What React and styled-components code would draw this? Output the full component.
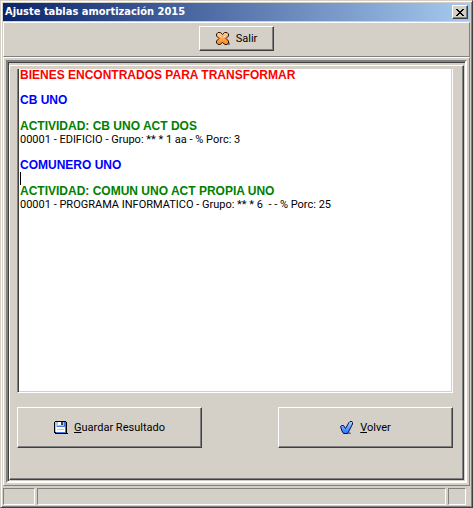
import { useState } from 'react'
import styled, { createGlobalStyle } from 'styled-components'

const face = '#d4d0c8'
const shadow = '#808080'
const dark = '#404040'

const lines = [
    { kind: 'title', text: 'BIENES ENCONTRADOS PARA TRANSFORMAR' },
    { kind: 'plain', text: '' },
    { kind: 'owner', text: 'CB UNO' },
    { kind: 'plain', text: '' },
    { kind: 'activity', text: 'ACTIVIDAD: CB UNO ACT DOS' },
    { kind: 'plain', text: '00001 - EDIFICIO - Grupo: ** * 1 aa - % Porc: 3' },
    { kind: 'plain', text: '' },
    { kind: 'owner', text: 'COMUNERO UNO' },
    { kind: 'plain', text: '', caret: true },
    { kind: 'activity', text: 'ACTIVIDAD: COMUN UNO ACT PROPIA UNO' },
    { kind: 'plain', text: '00001 - PROGRAMA INFORMATICO - Grupo: ** * 6  - - % Porc: 25' },
]

const colors = {
    title: '#ff0000',
    owner: '#0000ff',
    activity: '#008000',
    plain: '#000000',
}

const CrossIcon = () => (
    <svg width="14" height="14" viewBox="0 0 14 14" aria-hidden="true">
        <defs>
            <linearGradient id="cross" x1="0" y1="0" x2="0" y2="1">
                <stop offset="0" stopColor="#ffc890" />
                <stop offset="1" stopColor="#ff8410" />
            </linearGradient>
        </defs>
        <path d="M9 13h5v-2l-1-1z" fill="#808080" />
        <path
            d="M2 .5h2.500L6.500 2.500 8.500.5H11L12.500 2v2L10 6.500l2.500 2.500v2L11 12.500H9L6.500 10.500 4 12.500H2L.5 11V9L3 6.500.5 4V2z"
            fill="url(#cross)"
            stroke="#301808"
        />
        <path d="M2.500 2.500l3 3M10.500 2.500l-3 3" fill="none" stroke="#ffe0bc" />
    </svg>
)

const DiskIcon = () => (
    <svg width="14" height="14" viewBox="0 0 14 14" shapeRendering="crispEdges" aria-hidden="true">
        <path d="M1 0h11v1h1v11h1v1H1v-1H0V1h1z" fill="#000" />
        <path d="M1 1h11v11H2v-1H1z" fill="#3c78e0" />
        <path d="M1 1h2v10H1z" fill="#a8c8ff" />
        <path d="M3 1h7v4H3z" fill="#c0c0c0" />
        <path d="M4 1h3v3H4z" fill="#fff" />
        <path d="M7 1h2v3H7z" fill="#404040" />
        <path d="M2 6h9v5H2z" fill="#fff" />
        <path d="M3 8h7v1H3z" fill="#c0c8e0" />
    </svg>
)

const CheckIcon = () => (
    <svg width="14" height="14" viewBox="0 0 14 14" aria-hidden="true">
        <defs>
            <linearGradient id="check" x1="0" y1="0" x2="0" y2="1">
                <stop offset="0" stopColor="#b0d4ff" />
                <stop offset="1" stopColor="#2070ff" />
            </linearGradient>
        </defs>
        <path d="M6 13h5v-1l-2-1z" fill="#707070" />
        <path
            d="M.5 5.500L2 4.500h1.500l2 3L9 1.500l1-1h2l.5 1v1.500L9 10l-1.500 2.500h-4L2 10z"
            fill="url(#check)"
            stroke="#081040"
        />
    </svg>
)

const CloseGlyph = () => (
    <svg width="8" height="7" viewBox="0 0 8 7" shapeRendering="crispEdges" aria-hidden="true">
        <path d="M0 0h2v1h1v1h2V1h1V0h2v1H7v1H6v1H5v1h1v1h1v1h1v1H6V6H5V5H3v1H2v1H0V6h1V5h1V4h1V3H2V2H1V1H0z" />
    </svg>
)

export default function App() {
    const [report] = useState(lines)

    return (
        <>
            <GlobalStyle />
            <Window>
                <TitleBar>
                    <Title>Ajuste tablas amortización 2015</Title>
                    <CloseButton type="button" aria-label="Cerrar"><CloseGlyph /></CloseButton>
                </TitleBar>
                <Toolbar>
                    <ExitButton type="button"><CrossIcon />Salir</ExitButton>
                </Toolbar>
                <Body>
                    <Sunken>
                        <Content>
                            <Report role="textbox" aria-multiline="true" aria-label="Resultado" tabIndex={0}>
                                {report.map(({ kind, text, caret }, index) => (
                                    <Line key={index} $kind={kind}>{caret ? <Caret /> : text}</Line>
                                ))}
                            </Report>
                            <Actions>
                                <SaveButton type="button"><DiskIcon /><span><u>G</u>uardar Resultado</span></SaveButton>
                                <BackButton type="button"><CheckIcon /><span><u>V</u>olver</span></BackButton>
                            </Actions>
                        </Content>
                    </Sunken>
                </Body>
                <StatusBar>
                    <StatusCell $width="32px" />
                    <StatusCell />
                    <StatusCell $width="18px" />
                </StatusBar>
            </Window>
        </>
    )
}

const GlobalStyle = createGlobalStyle`
    * {
        box-sizing: border-box;
    }

    body {
        margin: 0;
        background: ${face};
        font-family: Roboto, sans-serif;
        font-size: 11px;
        color: #000;
    }
`

const Window = styled.div`
    min-height: 100vh;
    display: flex;
    flex-direction: column;
    padding: 2px 1px 0 2px;
    background: ${face};
    border: 1px solid;
    border-color: ${face} ${dark} ${dark} ${face};
    box-shadow: inset 1px 1px #fff, inset -1px -1px ${shadow};
`

const TitleBar = styled.header`
    height: 18px;
    margin: 0 1px 1px 0;
    padding: 0 2px;
    display: flex;
    align-items: center;
    justify-content: space-between;
    background: linear-gradient(to right, #0a246a, #a6caf0);
`

const Title = styled.h1`
    margin: 0;
    font: bold 11px/18px "DejaVu Sans Condensed", "DejaVu Sans", sans-serif;
    color: #fff;
`

const Button = styled.button`
    display: flex;
    align-items: center;
    justify-content: center;
    padding: 0;
    font: inherit;
    color: #000;
    background: ${face};
    border: 1px solid;
    border-color: #fff ${dark} ${dark} #fff;
    box-shadow: inset -1px -1px ${shadow};
`

const CloseButton = styled(Button)`
    width: 16px;
    height: 14px;
`

const ExitButton = styled(Button)`
    width: 75px;
    height: 25px;
    gap: 6px;
`

const Toolbar = styled.nav`
    height: 35px;
    margin-right: 1px;
    padding-top: 3px;
    display: flex;
    justify-content: center;
    border: 1px solid;
    border-color: #fff ${shadow} ${shadow} #fff;
`

const Body = styled.main`
    flex: 1;
    margin-right: 1px;
    padding: 2px;
    display: flex;
    border: 1px solid;
    border-color: #fff ${shadow} ${shadow} #fff;
`

const Sunken = styled.div`
    flex: 1;
    padding: 0 1px 1px 0;
    display: flex;
    border: 2px solid;
    border-color: ${shadow} #fff #fff ${shadow};
    box-shadow: inset 1px 1px ${dark};
`

const Content = styled.section`
    flex: 1;
    margin: 3px 0 0 1px;
    padding: 3px 10px 31px 7px;
    display: flex;
    flex-direction: column;
    border: 1px solid;
    border-color: #fff ${dark} ${dark} #fff;
    box-shadow: inset -1px -1px ${shadow};
`

const Report = styled.div`
    flex: 1;
    padding: 0 2px;
    background: #fff;
    border: 1px solid;
    border-color: ${shadow} #fff #fff ${shadow};
    border-top: 0;
    box-shadow: inset 1px 0 ${dark}, inset -1px -1px ${face};
    outline: none;
`

const Line = styled.p`
    height: 13px;
    margin: 0;
    line-height: 13px;
    white-space: pre;
    color: ${({ $kind }) => colors[$kind]};
    ${({ $kind }) => $kind !== 'plain' && `
        font-family: "Liberation Sans", Arial, sans-serif;
        font-size: 12px;
        font-weight: bold;
    `}

    &:first-child {
        height: 12px;
        line-height: 12px;
    }
`

const Caret = styled.span`
    display: block;
    width: 1px;
    height: 13px;
    background: #000;
`

const Actions = styled.div`
    margin-top: 14px;
    display: flex;
    justify-content: space-between;
`

const SaveButton = styled(Button)`
    width: 185px;
    height: 41px;
    gap: 6px;
`

const BackButton = styled(SaveButton)`
    width: 175px;
`

const StatusBar = styled.footer`
    height: 21px;
    padding: 2px 5px 2px 0;
    display: flex;
    gap: 2px;
`

const StatusCell = styled.div`
    flex: ${({ $width }) => $width ? `0 0 ${$width}` : '1'};
    border: 1px solid;
    border-color: ${shadow} #fff #fff ${shadow};
`
